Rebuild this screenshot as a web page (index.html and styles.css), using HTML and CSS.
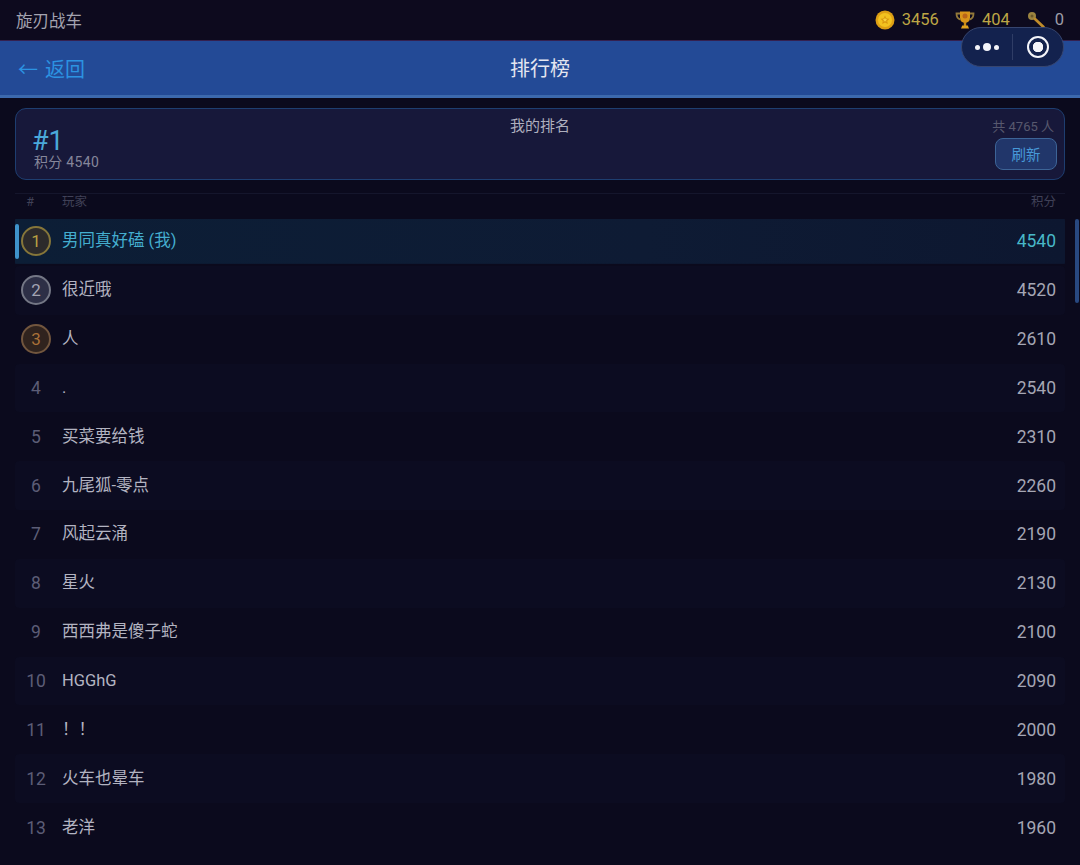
FILE: index.html
```html
<!DOCTYPE html>
<html lang="zh">
<head>
<meta charset="utf-8">
<title>排行榜</title>
<link rel="stylesheet" href="styles.css">
</head>
<body>
<div class="app">
  <header class="status">
    <span class="game">旋刃战车</span>
    <div class="res">
      <span class="res-item gold"><svg class="ic" viewBox="0 0 20 20"><circle cx="10" cy="10" r="9.500" fill="#dd9f14"/><circle cx="10" cy="10" r="7" fill="#f2c21f"/><path d="M10 5.500l1.400 2.900 3.100.4-2.300 2.100.6 3.100-2.800-1.500-2.800 1.500.6-3.100-2.300-2.100 3.100-.4z" fill="#d9970f"/><path d="M10 7.600l.7 1.400 1.500.2-1.100 1 .3 1.500-1.400-.7-1.400.7.3-1.500-1.100-1 1.500-.2z" fill="#f6d23e"/></svg>3456</span>
      <span class="res-item gold"><svg class="ic" viewBox="0 0 20 20"><path d="M5 1.500h10v6.500a5 5 0 0 1-10 0z" fill="#d8951a"/><circle cx="10" cy="6" r="2.500" fill="#b8641a"/><path d="M5 3.500H1.500c0 3.500 1.500 5.500 4 6M15 3.500h3.500c0 3.500-1.500 5.500-4 6" fill="none" stroke="#93793a" stroke-width="1.800"/><rect x="8.800" y="12" width="2.400" height="4" fill="#c98a18"/><path d="M6 18.500l1.200-3h5.600l1.200 3z" fill="#e0a21f"/></svg>404</span>
      <span class="res-item grey"><svg class="ic" viewBox="0 0 20 20"><circle cx="6" cy="6" r="4" fill="#9c8440"/><circle cx="6" cy="6" r="1.500" fill="#6d5a2a"/><path d="M9 9l8.500 8" stroke="#c08c2a" stroke-width="2.800" stroke-linecap="round"/></svg>0</span>
    </div>
  </header>

  <nav class="nav">
    <a class="back"><span class="arrow">←</span>返回</a>
    <h1 class="title">排行榜</h1>
    <div class="capsule">
      <span class="cap-dots"><i></i><i class="big"></i><i></i></span>
      <span class="cap-sep"></span>
      <span class="cap-target"><i></i></span>
    </div>
  </nav>

  <section class="mine">
    <div class="mine-left">
      <div class="mine-rank">#1</div>
      <div class="mine-score">积分 4540</div>
    </div>
    <div class="mine-title">我的排名</div>
    <div class="mine-right">
      <div class="mine-total">共 4765 人</div>
      <button class="refresh">刷新</button>
    </div>
  </section>

  <div class="thead">
    <span class="c-rank">#</span>
    <span class="c-name">玩家</span>
    <span class="c-score">积分</span>
  </div>

  <main class="list">
    <div class="row me"><span class="c-rank"><b class="medal m1">1</b></span><span class="c-name">男同真好磕 (我)</span><span class="c-score">4540</span></div>
    <div class="row"><span class="c-rank"><b class="medal m2">2</b></span><span class="c-name">很近哦</span><span class="c-score">4520</span></div>
    <div class="row"><span class="c-rank"><b class="medal m3">3</b></span><span class="c-name">人</span><span class="c-score">2610</span></div>
    <div class="row"><span class="c-rank">4</span><span class="c-name">.</span><span class="c-score">2540</span></div>
    <div class="row"><span class="c-rank">5</span><span class="c-name">买菜要给钱</span><span class="c-score">2310</span></div>
    <div class="row"><span class="c-rank">6</span><span class="c-name">九尾狐-零点</span><span class="c-score">2260</span></div>
    <div class="row"><span class="c-rank">7</span><span class="c-name">风起云涌</span><span class="c-score">2190</span></div>
    <div class="row"><span class="c-rank">8</span><span class="c-name">星火</span><span class="c-score">2130</span></div>
    <div class="row"><span class="c-rank">9</span><span class="c-name">西西弗是傻子蛇</span><span class="c-score">2100</span></div>
    <div class="row"><span class="c-rank">10</span><span class="c-name">HGGhG</span><span class="c-score">2090</span></div>
    <div class="row"><span class="c-rank">11</span><span class="c-name">！！</span><span class="c-score">2000</span></div>
    <div class="row"><span class="c-rank">12</span><span class="c-name">火车也晕车</span><span class="c-score">1980</span></div>
    <div class="row"><span class="c-rank">13</span><span class="c-name">老洋</span><span class="c-score">1960</span></div>
    <div class="scrollbar"></div>
  </main>
</div>
</body>
</html>
```
FILE: styles.css
```css
* { box-sizing: border-box; }
html, body { margin: 0; height: 100%; }
body {
  background: #0b0a1d;
  font-family: Roboto, "Noto Sans CJK SC", sans-serif;
  color: #c6c7d0;
}
.app {
  width: 1080px;
  height: 865px;
  overflow: hidden;
  display: flex;
  flex-direction: column;
  background: #0b0a1d;
}
.status {
  height: 41px;
  flex: none;
  display: flex;
  align-items: center;
  justify-content: space-between;
  padding: 0 16px;
  background: #0d0a1e;
  border-bottom: 1px solid #34204f;
}
.game { font-size: 16.500px; color: #a4a3b0; margin-top: -1px; }
.res { display: flex; align-items: center; gap: 16px; margin-top: -1px; }
.res-item { display: flex; align-items: center; gap: 7px; font-size: 16.500px; }
.gold { color: #bda645; }
.grey { color: #9d9da8; gap: 9px; }
.ic { width: 20px; height: 20px; display: block; }

.nav {
  height: 57px;
  flex: none;
  position: relative;
  display: flex;
  align-items: center;
  padding: 0 18px;
  background: #234a96;
  border-bottom: 3px solid #3c69ad;
}
.back { display: flex; align-items: center; gap: 7px; font-size: 20px; color: #2c93e2; margin-top: 1px; }
.arrow { font-size: 20px; }
.title {
  position: absolute;
  left: 0;
  right: 0;
  top: 14px;
  margin: 0;
  text-align: center;
  font-size: 20px;
  line-height: 28px;
  font-weight: 400;
  color: #e4e6f0;
}
.capsule {
  position: absolute;
  right: 16px;
  top: -14px;
  width: 103px;
  height: 40px;
  display: flex;
  align-items: center;
  border-radius: 20px;
  background: #13224e;
  border: 1px solid #36456f;
}
.cap-dots { width: 50px; display: flex; align-items: center; justify-content: center; gap: 3px; }
.cap-dots i { width: 5px; height: 5px; border-radius: 50%; background: #f4f5fa; }
.cap-dots i.big { width: 8px; height: 8px; }
.cap-sep { width: 1px; height: 26px; background: #2f3d66; }
.cap-target { flex: 1; display: flex; justify-content: center; }
.cap-target i {
  width: 22px;
  height: 22px;
  border-radius: 50%;
  border: 2.500px solid #f4f5fa;
  display: block;
  background: radial-gradient(circle, #f4f5fa 0 5px, transparent 5.500px);
}

.mine {
  position: relative;
  flex: none;
  margin: 10px 15px 0;
  height: 72px;
  padding: 0 7px 0 18px;
  display: flex;
  align-items: stretch;
  justify-content: space-between;
  border: 1px solid #1e3e70;
  border-radius: 11px;
  background: #17183a;
}
.mine-left { padding-top: 19px; }
.mine-rank { font-size: 27px; line-height: 26px; color: #4aa9da; margin-left: -2px; }
.mine-score { font-size: 14px; line-height: 18px; color: #85869a; letter-spacing: .3px; margin-top: -1px; }
.mine-title {
  position: absolute;
  left: 0;
  right: 0;
  top: 7px;
  text-align: center;
  font-size: 15px;
  line-height: 20px;
  color: #aeafbe;
}
.mine-right { display: flex; flex-direction: column; align-items: flex-end; padding-top: 9px; }
.mine-total { font-size: 13px; line-height: 17px; color: #57586e; padding-right: 3px; }
.refresh {
  margin-top: 3px;
  width: 62px;
  height: 32px;
  padding: 0 0 2px;
  border: 1px solid #3d6497;
  border-radius: 8px;
  background: #21366a;
  color: #4799d8;
  font-family: inherit;
  font-size: 14.500px;
}

.thead {
  flex: none;
  margin: 13px 15px 0;
  height: 24px;
  display: flex;
  align-items: flex-start;
  padding: 0 9px 0 0;
  border-top: 1px solid #15162c;
  font-size: 12.500px;
  line-height: 15px;
  color: #404157;
}
.c-rank { width: 47px; flex: none; text-align: center; padding-right: 5px; display: flex; justify-content: center; }
.thead .c-rank { padding-right: 17px; }
.c-name { flex: 1; }
.c-score { text-align: right; }

.list {
  flex: 1;
  position: relative;
  padding: 0 15px;
  min-height: 0;
}
.row {
  height: 48.850px;
  display: flex;
  align-items: center;
  padding: 0 9px 0 0;
  font-size: 16.500px;
  color: #b3b4c1;
  border-radius: 4px;
}
.row:nth-child(even) { background: #0c0c21; }
.row .c-rank { color: #5c5d76; font-size: 17.500px; }
.row .c-score { font-size: 17.500px; color: #a5a6b4; }
.row .c-name { line-height: 24px; }
.row.me {
  position: relative;
  background: linear-gradient(90deg, #0c1e36 0%, #0e1b34 60%, #0d1730 100%) 0 2px / 100% 44.850px no-repeat;
  color: #4fb5d9;
}
.row.me::before {
  content: "";
  position: absolute;
  left: 0;
  top: 7px;
  width: 4px;
  height: 35px;
  border-radius: 2px;
  background: #3f93cb;
}
.row.me .c-name { color: #44aecf; }
.row.me .c-score { color: #48b8c8; }
.medal {
  width: 30px;
  height: 30px;
  border-radius: 50%;
  display: flex;
  align-items: center;
  justify-content: center;
  font-weight: 400;
  font-size: 17px;
  flex: none;
}
.m1 { border: 2px solid #86763a; background: #2c2a2b; color: #b9a043; }
.m2 { border: 2px solid #747785; background: #2d2f46; color: #a3a4b2; }
.m3 { border: 2px solid #72563e; background: #30231e; color: #aa7138; }
.scrollbar {
  position: absolute;
  right: 1px;
  top: 2px;
  width: 4px;
  height: 84px;
  background: #284880;
  border-radius: 2px;
}
```
